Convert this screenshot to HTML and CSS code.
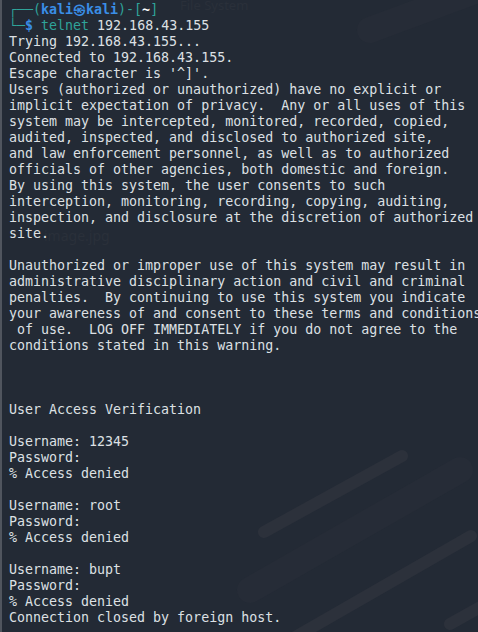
FILE: index.html
```html
<!DOCTYPE html>
<html>
<head>
<meta charset="utf-8">
<link rel="stylesheet" href="styles.css">
</head>
<body>
<div class="terminal">
  <div class="desktop" aria-hidden="true">
    <span class="ghost ghost-fs">File System</span>
    <span class="ghost ghost-img">image.jpg</span>
    <svg class="stripes" width="478" height="632" viewBox="0 0 478 632">
      <g stroke="#2c313b" stroke-width="12" stroke-linecap="round" fill="none">
        <line x1="264" y1="532" x2="402" y2="456"/>
        <line x1="290" y1="640" x2="471" y2="536"/>
        <line x1="450" y1="624" x2="500" y2="596"/>
      </g>
      <g stroke="#262c37" stroke-width="26" stroke-linecap="round" fill="none">
        <line x1="250" y1="590" x2="460" y2="470"/>
        <line x1="370" y1="30" x2="478" y2="-10"/>
      </g>
    </svg>
  </div>
<pre class="out"><span class="g">┌──(</span><span class="b">kali㉿kali</span><span class="g">)-[</span><span class="w">~</span><span class="g">]</span>
<span class="g">└─</span><span class="b">$</span> <span class="g">telnet</span> 192.168.43.155
Trying 192.168.43.155...
Connected to 192.168.43.155.
Escape character is '^]'.
Users (authorized or unauthorized) have no explicit or
implicit expectation of privacy.  Any or all uses of this
system may be intercepted, monitored, recorded, copied,
audited, inspected, and disclosed to authorized site,
and law enforcement personnel, as well as to authorized
officials of other agencies, both domestic and foreign.
By using this system, the user consents to such
interception, monitoring, recording, copying, auditing,
inspection, and disclosure at the discretion of authorized
site.

Unauthorized or improper use of this system may result in
administrative disciplinary action and civil and criminal
penalties.  By continuing to use this system you indicate
your awareness of and consent to these terms and conditions
 of use.  LOG OFF IMMEDIATELY if you do not agree to the
conditions stated in this warning.



User Access Verification

Username: 12345
Password:
% Access denied

Username: root
Password:
% Access denied

Username: bupt
Password:
% Access denied
Connection closed by foreign host.</pre>
</div>
</body>
</html>
```
FILE: styles.css
```css
html, body {
  margin: 0;
  padding: 0;
  background: #232a35;
}
.terminal {
  position: relative;
  width: 478px;
  height: 632px;
  overflow: hidden;
  background: #232a35;
  box-sizing: border-box;
  border-left: 2px solid #50555e;
}
.desktop {
  position: absolute;
  left: -2px;
  top: 0;
  width: 478px;
  height: 632px;
}
.stripes {
  position: absolute;
  left: 0;
  top: 0;
}
.ghost {
  position: absolute;
  font-family: "Noto Sans", sans-serif;
  font-size: 13px;
  color: #2a303a;
}
.ghost-fs { left: 180px; top: -4px; }
.ghost-img { left: 44px; top: 226px; font-size: 14px; }
.out {
  position: relative;
  margin: 0;
  padding: 2px 0 0 7px;
  font-family: "DejaVu Sans Mono", monospace;
  font-size: 13.3px;
  line-height: 16px;
  color: #dde0e4;
  white-space: pre;
}
.g { color: #2fa39a; }
.b { color: #3a8ee6; font-weight: bold; }
.w { color: #ffffff; font-weight: bold; }
```
